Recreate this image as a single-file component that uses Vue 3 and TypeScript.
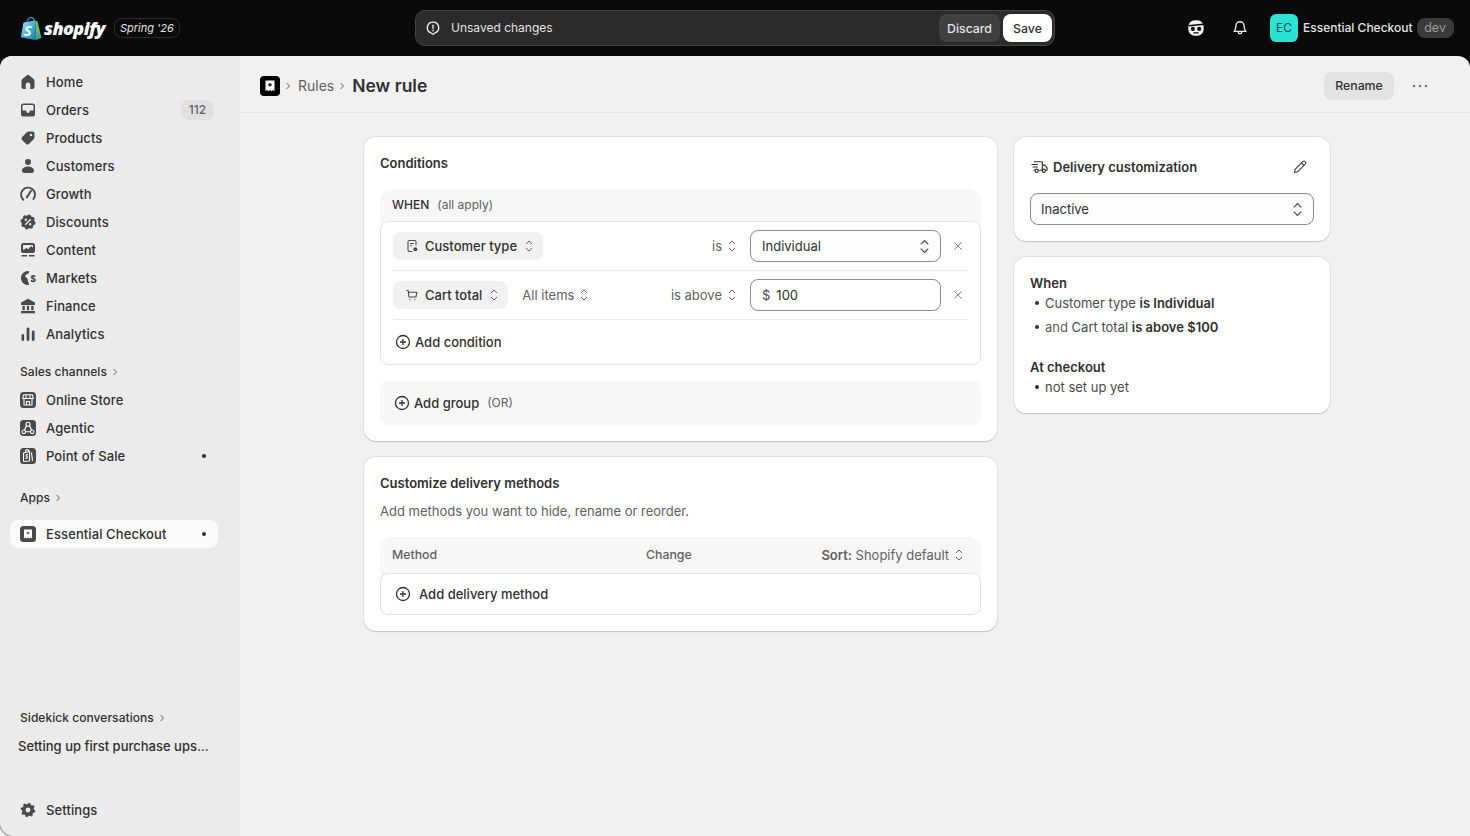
<template>
  <div class="app">
    <header class="topbar">
      <div class="top-left">
        <svg class="bag" viewBox="0 0 22 25" width="22" height="25">
          <defs>
            <linearGradient id="bagA" x1="0" y1="0" x2="1" y2="1">
              <stop offset="0" stop-color="#a8e2f5" />
              <stop offset="0.55" stop-color="#3fb0e0" />
              <stop offset="1" stop-color="#1c7fb0" />
            </linearGradient>
            <linearGradient id="bagB" x1="0" y1="0" x2="0" y2="1">
              <stop offset="0" stop-color="#8cc63f" />
              <stop offset="1" stop-color="#38a0a0" />
            </linearGradient>
          </defs>
          <path d="M7 7c0-3 1.700-5.500 4-5.500S14.500 3.500 14.500 7" fill="none" stroke="#3a87b8" stroke-width="1.300" />
          <path d="M3.500 6.500 15.500 4.500 15.500 24 .8 21.300z" fill="url(#bagA)" />
          <path d="M15.500 4.500 17.500 5.500 21.500 22 15.500 24z" fill="url(#bagB)" />
          <text x="3.800" y="20" class="bag-s">S</text>
        </svg>
        <span class="wordmark">shopify</span>
        <span class="edition">Spring '26</span>
      </div>

      <div class="save-bar">
        <svg viewBox="0 0 20 20" width="18" height="18" fill="none" stroke="#f1f1f1" stroke-width="1.500">
          <path d="M10 3.500a6.200 6.200 0 0 1 2.300 12l-2.300 1.500-2.300-1.500a6.200 6.200 0 0 1 2.300-12z" stroke-linejoin="round" />
          <path d="M10 6.800v3.600M10 12.500v.6" stroke-linecap="round" />
        </svg>
        <span class="save-text">Unsaved changes</span>
        <button class="btn-discard">Discard</button>
        <button class="btn-save">Save</button>
      </div>

      <div class="top-right">
        <svg class="sidekick" viewBox="0 0 20 20" width="18" height="18">
          <rect x="1.500" y="1.500" width="17" height="17" rx="7" fill="#f1f1f1" />
          <path d="M2 7.500 18 5.800" stroke="#0a0a0a" stroke-width="1.500" />
          <circle cx="6.500" cy="11" r="2.300" fill="#0a0a0a" />
          <circle cx="13.500" cy="11" r="2.300" fill="#0a0a0a" />
          <path d="M7.500 15.400h5" stroke="#0a0a0a" stroke-width="1.300" stroke-linecap="round" />
        </svg>
        <svg class="bell" viewBox="0 0 20 20" width="18" height="18" fill="none" stroke="#f1f1f1" stroke-width="1.500" stroke-linejoin="round">
          <path d="M10 3a4.500 4.500 0 0 0-4.500 4.500c0 3-.6 4.500-2 6.300h13c-1.400-1.800-2-3.300-2-6.300A4.500 4.500 0 0 0 10 3z" />
          <path d="M8 14.500a2 2 0 0 0 4 0" />
        </svg>
        <span class="avatar">EC</span>
        <span class="store-name">Essential Checkout</span>
        <span class="dev">dev</span>
      </div>
    </header>

    <div class="shell">
      <aside class="sidebar">
        <nav class="nav">
          <a v-for="item in mainNav" :key="item.label" class="nav-item">
            <svg class="nav-icon" viewBox="0 0 20 20" width="20" height="20">
              <path v-if="item.d" :d="item.d" fill="#4a4a4a" fill-rule="evenodd" />
              <path v-if="item.s" :d="item.s" fill="none" stroke="#4a4a4a" stroke-width="1.900" stroke-linecap="round" />
            </svg>
            <span>{{ item.label }}</span>
            <span v-if="item.badge" class="count">{{ item.badge }}</span>
          </a>
        </nav>

        <div class="nav-label sales-label">Sales channels <span class="chev-wrap"><svg viewBox="0 0 8 8" width="8" height="8"><path d="M2.500 1 5.500 4l-3 3" /></svg></span></div>
        <nav class="nav">
          <a v-for="item in channels" :key="item.label" class="nav-item">
            <svg class="nav-icon" viewBox="0 0 20 20" width="20" height="20">
              <rect x="2" y="2" width="16" height="16" rx="3.500" fill="#4a4a4a" />
              <path :d="item.s" fill="none" stroke="#fff" stroke-width="1.100" stroke-linejoin="round" />
            </svg>
            <span>{{ item.label }}</span>
            <span v-if="item.dot" class="dot"></span>
          </a>
        </nav>

        <div class="nav-label apps-label">Apps <span class="chev-wrap"><svg viewBox="0 0 8 8" width="8" height="8"><path d="M2.500 1 5.500 4l-3 3" /></svg></span></div>
        <a class="nav-item active">
          <svg class="nav-icon" viewBox="0 0 20 20" width="20" height="20">
            <rect x="2" y="2" width="16" height="16" rx="3.500" fill="#4a4a4a" />
            <path d="M6 5.500h8v9l-1.300-1-1.400 1-1.300-1-1.300 1-1.400-1-1.300 1z" fill="#fff" />
            <path d="M10 7.500v3M8.500 9h3" stroke="#4a4a4a" stroke-width="1" />
          </svg>
          <span>Essential Checkout</span>
          <span class="dot"></span>
        </a>

        <div class="nav-label sidekick-label">Sidekick conversations <span class="chev-wrap"><svg viewBox="0 0 8 8" width="8" height="8"><path d="M2.500 1 5.500 4l-3 3" /></svg></span></div>
        <div class="conversation">Setting up first purchase ups...</div>

        <a class="nav-item settings">
          <svg class="nav-icon" viewBox="0 0 20 20" width="20" height="20">
            <path :d="gearPath" fill="#4a4a4a" fill-rule="evenodd" />
          </svg>
          <span>Settings</span>
        </a>
      </aside>

      <main class="main">
        <div class="page-head">
          <svg class="crumb-app" viewBox="0 0 20 20" width="20" height="20">
            <rect width="20" height="20" rx="4" fill="#000" />
            <path d="M5.500 4.500h9v10.800l-1.500-1.200-1.500 1.200-1.500-1.200-1.500 1.200-1.500-1.200-1.500 1.200z" fill="#fff" />
            <path d="M10 7v3.600M8.200 8.800h3.600" stroke="#000" stroke-width="1.200" />
          </svg>
          <svg class="crumb-sep" viewBox="0 0 8 8" width="8" height="8"><path d="M2.500 1 5.500 4l-3 3" /></svg>
          <span class="crumb">Rules</span>
          <svg class="crumb-sep" viewBox="0 0 8 8" width="8" height="8"><path d="M2.500 1 5.500 4l-3 3" /></svg>
          <h1>New rule</h1>
          <button class="rename">Rename</button>
          <svg class="more" viewBox="0 0 16 4" width="16" height="4" fill="#7a7a7a">
            <circle cx="2" cy="2" r="1.300" /><circle cx="8" cy="2" r="1.300" /><circle cx="14" cy="2" r="1.300" />
          </svg>
        </div>

        <div class="content">
          <div class="col-left">
            <section class="card">
              <h2>Conditions</h2>
              <div class="when-group">
                <div class="when-head"><b>WHEN</b><span>(all apply)</span></div>
                <div class="when-box">
                  <div class="row">
                    <span class="chip">
                      <svg viewBox="0 0 14 14" width="14" height="14" fill="none" stroke="#4a4a4a" stroke-width="1.100">
                        <path d="M11 6.500V3a1.500 1.500 0 0 0-1.500-1.500h-5A1.500 1.500 0 0 0 3 3v8a1.500 1.500 0 0 0 1.500 1.500h3" />
                        <path d="M5.200 4.500h3.600M5.200 6.800h2" />
                        <circle cx="10.300" cy="10.300" r="2" fill="#4a4a4a" stroke="none" />
                      </svg>
                      <span class="chip-text">Customer type</span>
                      <svg class="updown" viewBox="0 0 10 14" width="10" height="14"><path d="M2 5 5 2l3 3M2 9l3 3 3-3" /></svg>
                    </span>
                    <span class="grow"></span>
                    <span class="op">is<svg class="updown" viewBox="0 0 10 14" width="10" height="14"><path d="M2 5 5 2l3 3M2 9l3 3 3-3" /></svg></span>
                    <div class="field">
                      <span>Individual</span>
                      <svg class="updown big" viewBox="0 0 10 14" width="11" height="15"><path d="M1.500 5 5 1.500 8.500 5M1.500 9 5 12.500 8.500 9" /></svg>
                    </div>
                    <svg class="close" viewBox="0 0 10 10" width="10" height="10"><path d="M1.500 1.500l7 7M8.500 1.500l-7 7" /></svg>
                  </div>
                  <div class="row">
                    <span class="chip">
                      <svg viewBox="0 0 14 14" width="14" height="14" fill="none" stroke="#4a4a4a" stroke-width="1.100">
                        <path d="M1.500 2.500h1.700l.8 6.500h7l.8-4.800H3.500" stroke-linejoin="round" />
                        <path d="M4.500 11.500h.8M9.500 11.500h.8" stroke-width="1.500" />
                      </svg>
                      <span class="chip-text">Cart total</span>
                      <svg class="updown" viewBox="0 0 10 14" width="10" height="14"><path d="M2 5 5 2l3 3M2 9l3 3 3-3" /></svg>
                    </span>
                    <span class="op items">All items<svg class="updown" viewBox="0 0 10 14" width="10" height="14"><path d="M2 5 5 2l3 3M2 9l3 3 3-3" /></svg></span>
                    <span class="grow"></span>
                    <span class="op">is above<svg class="updown" viewBox="0 0 10 14" width="10" height="14"><path d="M2 5 5 2l3 3M2 9l3 3 3-3" /></svg></span>
                    <div class="field money">
                      <span class="cur">$</span><span>100</span>
                    </div>
                    <svg class="close" viewBox="0 0 10 10" width="10" height="10"><path d="M1.500 1.500l7 7M8.500 1.500l-7 7" /></svg>
                  </div>
                  <div class="add-condition">
                    <svg viewBox="0 0 16 16" width="16" height="16" class="plus"><circle cx="8" cy="8" r="6.500" /><path d="M8 5v6M5 8h6" /></svg>
                    Add condition
                  </div>
                </div>
              </div>
              <div class="add-group">
                <svg viewBox="0 0 16 16" width="16" height="16" class="plus"><circle cx="8" cy="8" r="6.500" /><path d="M8 5v6M5 8h6" /></svg>
                Add group
                <span>(OR)</span>
              </div>
            </section>

            <section class="card">
              <h2>Customize delivery methods</h2>
              <p class="sub">Add methods you want to hide, rename or reorder.</p>
              <div class="table">
                <div class="table-head">
                  <span class="col-method">Method</span>
                  <span>Change</span>
                  <span class="grow"></span>
                  <span class="sort"><span><b>Sort:</b> Shopify default</span><svg class="updown" viewBox="0 0 10 14" width="10" height="14"><path d="M2 5 5 2l3 3M2 9l3 3 3-3" /></svg></span>
                </div>
                <div class="table-body">
                  <svg viewBox="0 0 16 16" width="16" height="16" class="plus"><circle cx="8" cy="8" r="6.500" /><path d="M8 5v6M5 8h6" /></svg>
                  Add delivery method
                </div>
              </div>
            </section>
          </div>

          <div class="col-right">
            <section class="card">
              <div class="dc-head">
                <svg viewBox="0 0 18 14" width="17" height="14" fill="none" stroke="#303030" stroke-width="1.200" stroke-linejoin="round" stroke-linecap="round">
                  <path d="M3.500 1.500H12v3.500h2.500l2.500 2.800v2.700h-1.500M12 5v5.500H8M1 4.300h6M2 7h5M3 10.500h1" />
                  <circle cx="6" cy="11" r="1.700" /><circle cx="13.500" cy="11" r="1.700" />
                </svg>
                <h2>Delivery customization</h2>
                <span class="grow"></span>
                <svg viewBox="0 0 16 16" width="16" height="16" fill="none" stroke="#4a4a4a" stroke-width="1.200" stroke-linejoin="round">
                  <path d="M2.500 13.500l.6-3.200 7.600-7.600a1.700 1.700 0 0 1 2.500 2.500l-7.600 7.700z" />
                  <path d="M9.500 4l2.500 2.500" />
                </svg>
              </div>
              <div class="field wide">
                <span>Inactive</span>
                <svg class="updown big" viewBox="0 0 10 14" width="11" height="15"><path d="M1.500 5 5 1.500 8.500 5M1.500 9 5 12.500 8.500 9" /></svg>
              </div>
            </section>

            <section class="card summary">
              <h3>When</h3>
              <ul>
                <li>Customer type <b>is Individual</b></li>
                <li><i>and</i> Cart total <b>is above $100</b></li>
              </ul>
              <h3 class="second">At checkout</h3>
              <ul>
                <li class="muted">not set up yet</li>
              </ul>
            </section>
          </div>
        </div>
      </main>
    </div>
  </div>
</template>

<script setup lang="ts">
interface NavItem {
  label: string
  d?: string
  s?: string
  badge?: string
  dot?: boolean
}

// scalloped outlines for the gear and the discount badge
function notched(teeth: number, outer: number, inner: number): string {
  const pts: string[] = []
  const n = teeth * 4
  for (let i = 0; i < n; i++) {
    const r = i % 4 < 2 ? outer : inner
    const a = ((i + 0.5) / n) * Math.PI * 2
    pts.push(`${(10 + r * Math.cos(a)).toFixed(2)} ${(10 + r * Math.sin(a)).toFixed(2)}`)
  }
  return "M" + pts.join("L") + "z"
}

const gearPath = notched(8, 7.4, 5.9) + "M10 7.600a2.400 2.400 0 1 0 0 4.800 2.400 2.400 0 0 0 0-4.800z"
const badgePath =
  notched(8, 7.6, 6.5) +
  "M12.300 6.700l1 1-5.600 5.600-1-1zM7.800 6.600a1.200 1.200 0 1 0 0 2.400 1.200 1.200 0 0 0 0-2.400zM12.200 11a1.200 1.200 0 1 0 0 2.400 1.200 1.200 0 0 0 0-2.400z"

const mainNav: NavItem[] = [
  {
    label: "Home",
    d: "M8.900 3.300a1.700 1.700 0 0 1 2.200 0l4.500 3.800c.6.500.9 1.200.9 1.900v6a2 2 0 0 1-2 2h-2.200v-4.200a2.300 2.300 0 0 0-4.600 0V17H5.500a2 2 0 0 1-2-2V9c0-.7.300-1.400.9-1.900z",
  },
  {
    label: "Orders",
    badge: "112",
    d: "M5.500 3.500h9A2.500 2.500 0 0 1 17 6v8a2.500 2.500 0 0 1-2.500 2.500h-9A2.500 2.500 0 0 1 3 14V6a2.500 2.500 0 0 1 2.500-2.500zM4.500 6a1 1 0 0 1 1-1h9a1 1 0 0 1 1 1v4.500h-3a1 1 0 0 0-1 1 1.500 1.500 0 0 1-3 0 1 1 0 0 0-1-1h-3z",
  },
  {
    label: "Products",
    d: "M10.500 3.500h4a2 2 0 0 1 2 2v4a2 2 0 0 1-.6 1.400l-5 5a2 2 0 0 1-2.800 0l-4-4a2 2 0 0 1 0-2.800l5-5a2 2 0 0 1 1.400-.6zM13 5.800a1.200 1.200 0 1 0 0 2.400 1.200 1.200 0 0 0 0-2.400z",
  },
  {
    label: "Customers",
    d: "M10 3a3 3 0 1 1 0 6 3 3 0 0 1 0-6zM10 10.500c-3.500 0-6 1.800-6 4.200C4 16 5 17 6.300 17h7.400c1.300 0 2.300-1 2.300-2.300 0-2.400-2.500-4.200-6-4.200z",
  },
  {
    label: "Growth",
    s: "M5.300 15.800a7 7 0 1 1 10.200-.8M8.800 13.500 13 6.800",
  },
  { label: "Discounts", d: badgePath },
  {
    label: "Content",
    d: "M5.500 3h9A2.500 2.500 0 0 1 17 5.500v5a2.500 2.500 0 0 1-2.500 2.500h-9A2.500 2.500 0 0 1 3 10.500v-5A2.500 2.500 0 0 1 5.500 3zM5 5.500a.5.500 0 0 1 .5-.5h9a.5.500 0 0 1 .5.500v2.300l-2-1.600-2.800 3-1.700-1.200L5 10zM3.500 15h5.500v1.500H3.500zM11 15h5.500v1.500H11z",
  },
  {
    label: "Markets",
    d: "M9 3a7 7 0 0 1 2.500.5L10 6l-2 .5-1 2 2.500 2 .5 3 .8 1.200A5 5 0 0 0 11 17 7 7 0 1 1 9 3z",
    s: "M16.500 8.300c-.4-.6-2.800-.8-2.800.8 0 1.900 3.200 1.200 3.200 3 0 1.600-2.600 1.400-3.300.7",
  },
  {
    label: "Finance",
    d: "M10 2.800l7 3.600V9H3V6.400zM4.500 9.800h2.300v4.400H4.500zM8.850 9.800h2.300v4.400h-2.300zM13.200 9.800h2.300v4.400h-2.300zM3 15h14v2.200H3z",
  },
  {
    label: "Analytics",
    d: "M4.800 10a1.300 1.300 0 0 1 1.300 1.300v4.400a1.300 1.300 0 0 1-2.600 0v-4.400A1.300 1.300 0 0 1 4.800 10zM10 3.500a1.400 1.400 0 0 1 1.400 1.400v10.800a1.400 1.400 0 0 1-2.800 0V4.900A1.400 1.400 0 0 1 10 3.500zM15.200 6.500a1.400 1.400 0 0 1 1.400 1.400v7.800a1.400 1.400 0 0 1-2.800 0V7.900a1.400 1.400 0 0 1 1.400-1.400z",
  },
]

const channels: NavItem[] = [
  { label: "Online Store", s: "M5.500 4.800h9l.8 3.700H4.700zM6 8.500v6.500h8V8.500M8.500 15v-3.500h3V15M8 4.800v3.700M12 4.800v3.700" },
  { label: "Agentic", s: "M10 4.200a2 2 0 1 1 0 4 2 2 0 0 1 0-4zM5.800 12a1.800 1.800 0 1 1 0 3.600 1.800 1.800 0 0 1 0-3.600zM14.200 12a1.800 1.800 0 1 1 0 3.600 1.800 1.800 0 0 1 0-3.600zM8.500 7.500 6.500 12M11.500 7.500l2 4.500M7.600 13.800h4.800" },
  { label: "Point of Sale", dot: true, s: "M5.500 7 11.500 5.500V15l-6 .5zM7.500 6.500V5a1.800 1.800 0 0 1 3.500 0v1M10 8.800c-1.600-.8-2.700 1-1.300 1.600 1.400.6.500 2.500-1.200 1.800M13.500 6.500 14.500 15" },
]
</script>

<style>
html,
body {
  margin: 0;
  background: #0a0a0a;
}
</style>

<style scoped>
.app {
  height: 836px;
  width: 1470px;
  overflow: hidden;
  font-family: Inter, "Liberation Sans", sans-serif;
  font-size: 13px;
  line-height: 20px;
  color: #303030;
  background: #0a0a0a;
}

.topbar {
  height: 56px;
  display: flex;
  align-items: center;
}

.top-left {
  width: 415px;
  display: flex;
  align-items: center;
  padding-left: 20px;
  box-sizing: border-box;
}

.bag-s {
  font: italic 700 15px "Open Sans", sans-serif;
  fill: #fff;
}

.wordmark {
  margin-left: 2px;
  font: italic 800 18px/24px "Open Sans", sans-serif;
  letter-spacing: -0.6px;
  color: #fff;
}

.edition {
  margin-left: 9px;
  width: 66px;
  height: 20px;
  border: 1px solid #2b2b2b;
  border-radius: 8px;
  box-sizing: border-box;
  font-size: 11px;
  line-height: 18px;
  font-style: italic;
  text-align: center;
  color: #e3e3e3;
}

.save-bar {
  width: 640px;
  height: 36px;
  box-sizing: border-box;
  display: flex;
  align-items: center;
  padding: 0 2px 0 8px;
  background: #2b2b2b;
  border: 1px solid #444;
  border-radius: 10px;
}

.save-text {
  margin-left: 9px;
  flex: 1;
  font-size: 12px;
  color: #e3e3e3;
}

.btn-discard,
.btn-save {
  height: 28px;
  border: none;
  border-radius: 8px;
  font: 450 12.3px Inter, sans-serif;
}

.btn-discard {
  width: 61px;
  background: #404040;
  color: #e3e3e3;
}

.btn-save {
  width: 49px;
  margin-left: 3px;
  background: #fff;
  color: #303030;
}

.top-right {
  flex: 1;
  display: flex;
  align-items: center;
  padding-left: 132px;
}

.bell {
  margin-left: 26px;
}

.avatar {
  margin-left: 21px;
  width: 28px;
  height: 28px;
  border-radius: 6px;
  background: #2ae3d5;
  color: #0c4f4a;
  font-size: 12px;
  line-height: 28px;
  text-align: center;
}

.store-name {
  margin-left: 5px;
  font-size: 12px;
  font-weight: 500;
  color: #e3e3e3;
}

.dev {
  margin-left: 4px;
  width: 37px;
  height: 20px;
  border-radius: 8px;
  background: #3a3a3a;
  color: #9a9a9a;
  font-size: 12.5px;
  line-height: 20px;
  text-align: center;
}

.shell {
  height: 780px;
  display: flex;
  border-radius: 12px 12px 0 0;
  overflow: hidden;
  background: #f1f1f1;
}

.sidebar {
  width: 240px;
  flex: none;
  box-sizing: border-box;
  display: flex;
  flex-direction: column;
  padding: 12px 22px 12px 10px;
  background: #ebebeb;
  border-bottom-left-radius: 14px;
  box-shadow: -1px 1px 0 rgba(0, 0, 0, 0.3);
}

.nav {
  display: flex;
  flex-direction: column;
}

.nav-item {
  height: 28px;
  flex: none;
  display: flex;
  align-items: center;
  gap: 8px;
  padding: 0 8px;
  border-radius: 8px;
  font-weight: 450;
  letter-spacing: 0.1px;
  color: #303030;
}

.nav-item > span:nth-child(2) {
  flex: 1;
}

.count {
  flex: none;
  width: 33px;
  height: 20px;
  margin-right: -4px;
  border-radius: 8px;
  background: #e0e0e0;
  color: #616161;
  font-size: 12px;
  line-height: 20px;
  text-align: center;
}

.dot {
  width: 4px;
  height: 4px;
  margin-right: 4px;
  border-radius: 50%;
  background: #303030;
}

.active {
  margin-top: 8px;
  background: #fafafa;
}

.nav-label {
  height: 28px;
  flex: none;
  display: flex;
  align-items: center;
  gap: 4px;
  padding-left: 10px;
  font-size: 12px;
  font-weight: 450;
  letter-spacing: 0.05px;
  color: #303030;
}

.chev-wrap {
  display: flex;
}

.chev-wrap svg,
.crumb-sep {
  fill: none;
  stroke: #616161;
  stroke-width: 1;
}

.sales-label {
  margin-top: 10px;
}

.apps-label {
  margin-top: 14px;
}

.sidekick-label {
  margin-top: auto;
}

.conversation {
  height: 28px;
  flex: none;
  padding-left: 8px;
  line-height: 28px;
  font-weight: 450;
  white-space: nowrap;
}

.settings {
  margin-top: 36px;
}

.main {
  flex: 1;
  min-width: 0;
}

.page-head {
  height: 57px;
  box-sizing: border-box;
  display: flex;
  align-items: center;
  padding: 3px 42px 0 20px;
  border-bottom: 1px solid #e8e8e8;
}

.crumb-sep {
  margin: 0 6px 0 4px;
}

.crumb {
  font-size: 14px;
  color: #616161;
}

h1 {
  flex: 1;
  margin: 0;
  font-size: 17.5px;
  line-height: 28px;
  font-weight: 600;
  color: #303030;
}

.rename {
  width: 70px;
  height: 28px;
  border: none;
  border-radius: 8px;
  background: #e3e3e3;
  color: #303030;
  font: 450 12.3px Inter, sans-serif;
}

.more {
  margin-left: 18px;
}

.content {
  display: flex;
  justify-content: center;
  align-items: flex-start;
  gap: 16px;
  padding: 24px 16px 0 0;
}

.col-left {
  width: 634px;
  display: flex;
  flex-direction: column;
  gap: 16px;
}

.col-left .card {
  margin-right: 1px;
}

.col-right {
  width: 316px;
  display: flex;
  flex-direction: column;
  gap: 16px;
}

.card {
  padding: 16px;
  border-radius: 12px;
  background: #fff;
  box-shadow: 0 0 0 1px rgba(0, 0, 0, 0.05), 0 1px 1px rgba(0, 0, 0, 0.14);
}

h2 {
  margin: 0;
  font-size: 13px;
  line-height: 20px;
  font-weight: 600;
}

.when-group {
  margin-top: 16px;
  border-radius: 12px 12px 8px 8px;
  background: #f7f7f7;
}

.when-head {
  height: 32px;
  display: flex;
  align-items: center;
  gap: 8px;
  padding-left: 12px;
  font-size: 12px;
  color: #616161;
}

.when-head b {
  font-weight: 500;
  font-size: 12px;
  color: #303030;
}

.when-box {
  background: #fff;
  border: 1px solid #e3e3e3;
  border-radius: 8px;
  padding: 0 12px;
}

.row {
  height: 48px;
  display: flex;
  align-items: center;
  border-bottom: 1px solid #ebebeb;
}

.chip {
  height: 28px;
  display: flex;
  align-items: center;
  padding: 0 9px 0 12px;
  border-radius: 8px;
  background: #f1f1f1;
  font-weight: 450;
  color: #303030;
}

.chip-text {
  margin: 0 7px 0 6px;
}

.grow {
  flex: 1;
}

.updown {
  fill: none;
  stroke: #616161;
  stroke-width: 1;
  flex: none;
}

.updown.big {
  stroke: #4a4a4a;
  stroke-width: 1.200;
}

.op {
  display: flex;
  align-items: center;
  gap: 5px;
  margin-right: 13px;
  color: #616161;
}

.items {
  margin-left: 14px;
}

.field {
  width: 191px;
  height: 32px;
  box-sizing: border-box;
  display: flex;
  align-items: center;
  justify-content: space-between;
  padding: 0 10px 0 11px;
  border: 1px solid #8a8a8a;
  border-radius: 8px;
  background: #fdfdfd;
}

.money {
  justify-content: flex-start;
  gap: 6px;
  background: #fff;
}

.cur {
  color: #4a4a4a;
}

.wide {
  width: 100%;
  margin-top: 12px;
  padding-left: 10px;
}

.close {
  margin: 0 5px 0 12px;
  fill: none;
  stroke: #8a8a8a;
  stroke-width: 1;
}

.add-condition {
  height: 44px;
  display: flex;
  align-items: center;
  gap: 4px;
  padding-left: 2px;
  font-weight: 450;
}

.plus {
  flex: none;
  fill: none;
  stroke: #303030;
  stroke-width: 1.300;
}

.add-group {
  height: 44px;
  margin-top: 16px;
  display: flex;
  align-items: center;
  gap: 4px;
  padding-left: 14px;
  border-radius: 8px;
  background: #f7f7f7;
  font-weight: 450;
}

.add-group span {
  margin-left: 4px;
  font-size: 12px;
  font-weight: 400;
  color: #616161;
}

.sub {
  margin: 8px 0 0;
  color: #616161;
}

.table {
  margin-top: 16px;
  border-radius: 12px 12px 8px 8px;
  background: #f7f7f7;
}

.table-head {
  height: 36px;
  display: flex;
  align-items: center;
  padding: 0 17px 0 12px;
  font-size: 12.3px;
  font-weight: 450;
  color: #616161;
}

.col-method {
  width: 254px;
}

.sort {
  display: flex;
  align-items: center;
  gap: 5px;
  font-size: 13px;
  font-weight: 400;
}

.sort b {
  font-weight: 600;
}

.table-body {
  height: 42px;
  box-sizing: border-box;
  display: flex;
  align-items: center;
  gap: 8px;
  padding-left: 14px;
  background: #fff;
  border: 1px solid #e3e3e3;
  border-radius: 8px;
  font-weight: 450;
}

.dc-head {
  height: 28px;
  display: flex;
  align-items: center;
  gap: 5px;
  padding-right: 6px;
  padding-left: 1px;
}

.summary h3 {
  margin: 0;
  font-size: 13px;
  line-height: 20px;
  font-weight: 600;
}

.summary .second {
  margin-top: 20px;
}

.summary ul {
  margin: 0;
  padding: 0;
  list-style: none;
  display: flex;
  flex-direction: column;
  gap: 4px;
}

.summary li {
  position: relative;
  padding-left: 15px;
  color: #4a4a4a;
}

.summary li::before {
  content: "";
  position: absolute;
  left: 5px;
  top: 8px;
  width: 4px;
  height: 4px;
  border-radius: 50%;
  background: #303030;
}

.summary b {
  font-weight: 600;
  color: #303030;
}

.summary i {
  font-style: normal;
  color: #616161;
}

.muted {
  color: #616161;
}
</style>
